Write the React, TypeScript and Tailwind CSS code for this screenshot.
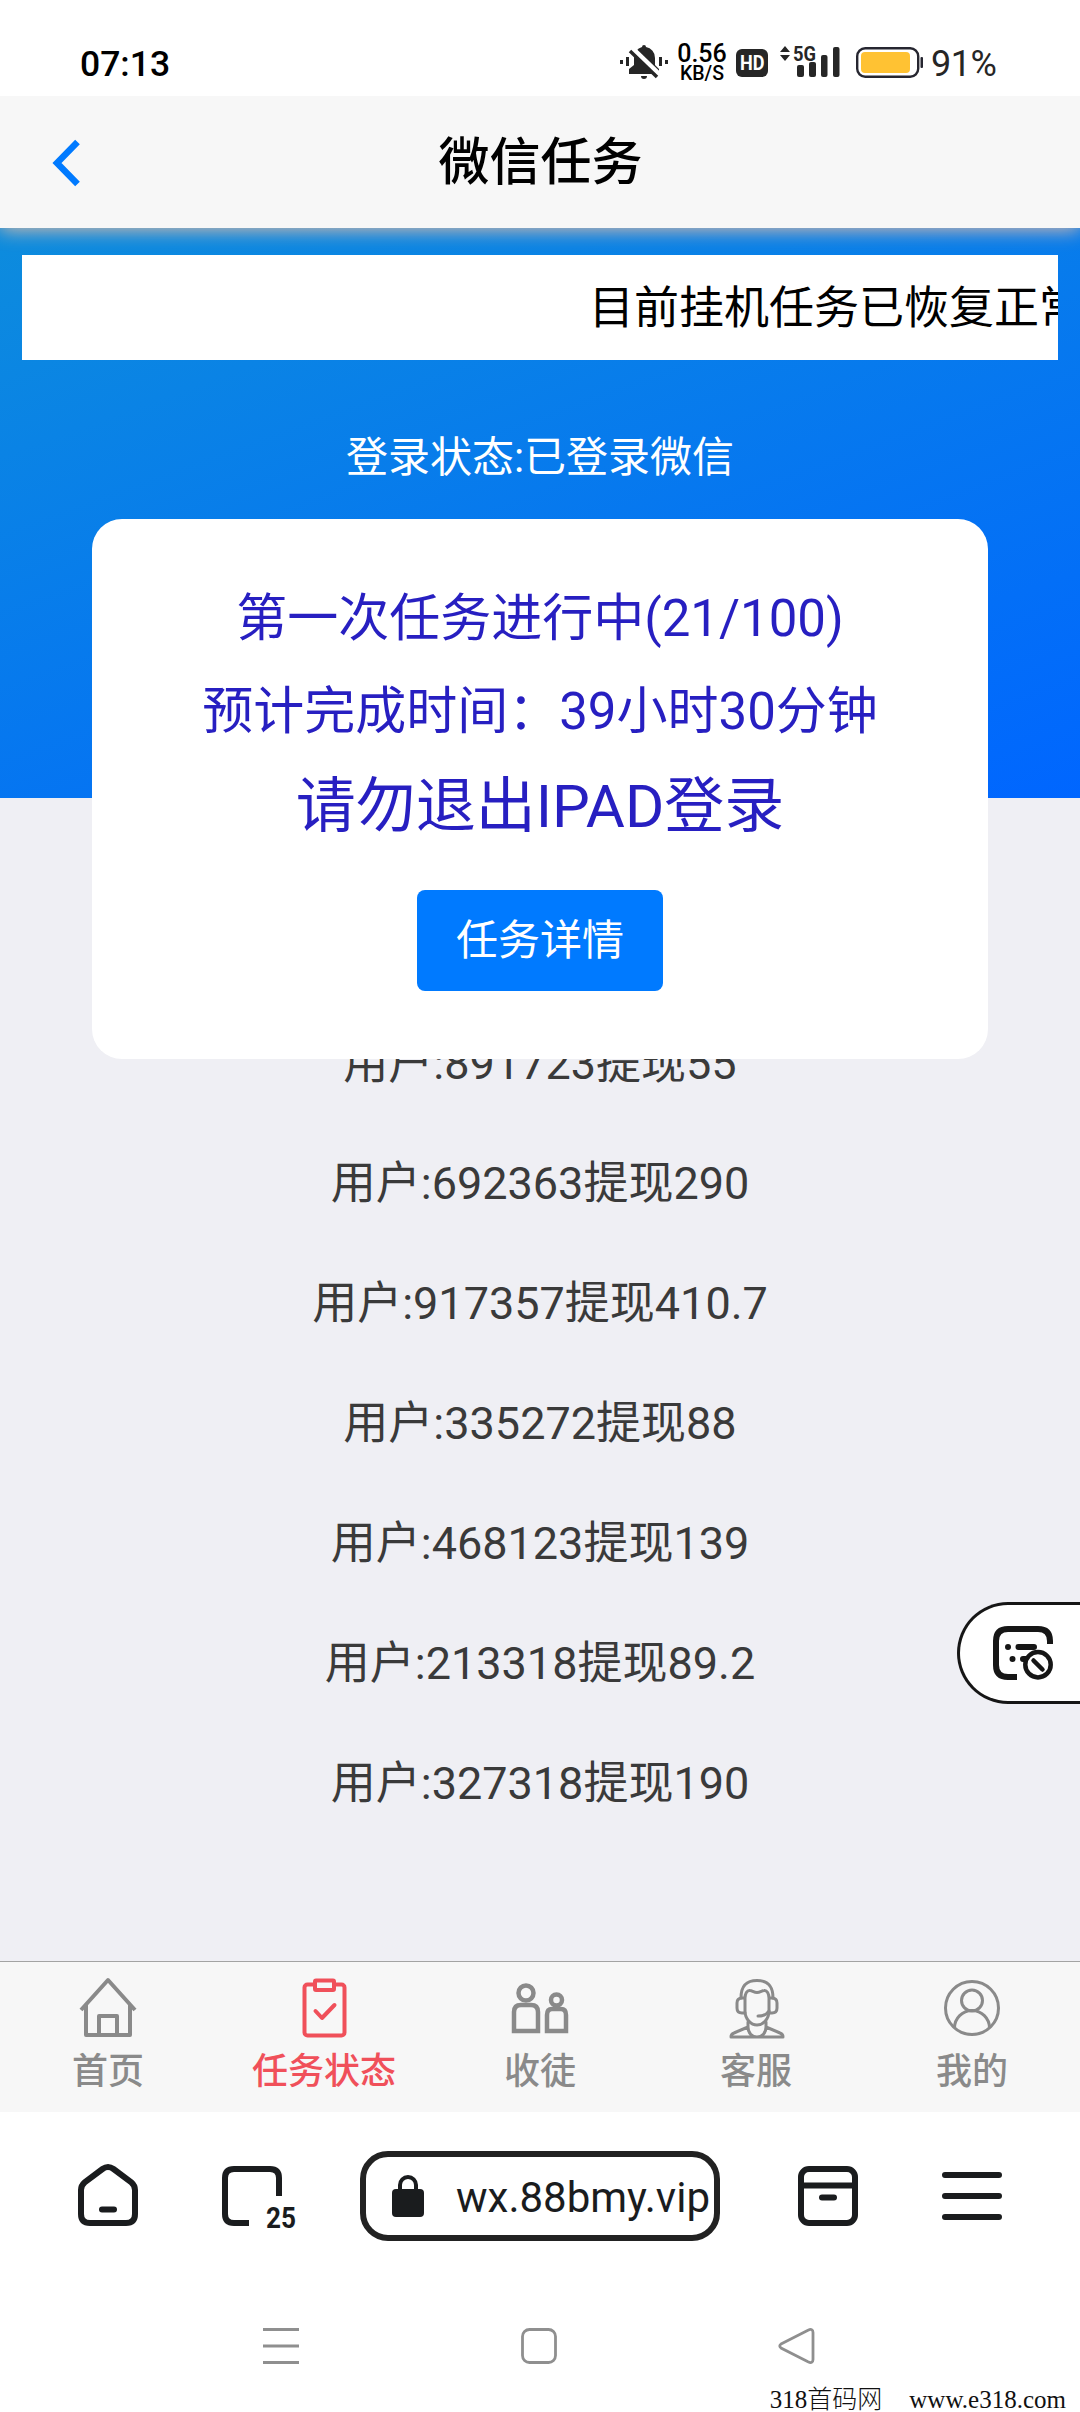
import type { ReactNode } from "react";

const USERS = [
  { id: "891723", amount: "55" },
  { id: "692363", amount: "290" },
  { id: "917357", amount: "410.7" },
  { id: "335272", amount: "88" },
  { id: "468123", amount: "139" },
  { id: "213318", amount: "89.2" },
  { id: "327318", amount: "190" },
];

function StatusBar() {
  return (
    <div className="relative z-20 flex h-24 items-start bg-white pl-[80px] text-[#262626]">
      <span className="mt-[43px] w-[540px] text-[35.5px] leading-[42px] font-medium text-black">07:13</span>
      {/* muted bell */}
      <svg className="mt-[45px] h-[36px] w-[50px] shrink-0" viewBox="0 0 50 36" fill="currentColor">
        <path d="M0 15h3v4H0zM6 12h3v9H6zM39 12h3v9h-3zM45 15h3v4h-3z" />
        <path d="M22 2a2 2 0 0 1 4 0a11 11 0 0 1 9 11v7l4 4v5H9v-5l5-4v-7a11 11 0 0 1 8-11zM21 31h6a3 3 0 0 1-6 0z" />
        <path d="M12 3l29 28" stroke="#fff" strokeWidth="5" />
        <path d="M10 6l27 26" stroke="currentColor" strokeWidth="3.500" />
      </svg>
      <div className="mt-[43px] ml-[5px] flex w-[54px] flex-col items-center font-medium text-black">
        <span className="text-[25px] leading-[22px]">0.56</span>
        <span className="text-[19.5px] leading-[18px]">KB/S</span>
      </div>
      <div className="mt-[49px] ml-[7px] grid h-[28px] w-[32px] place-items-center rounded-[6px] bg-[#262626] text-[21px] leading-none font-bold text-white">
        <span className="scale-x-[0.86]">HD</span>
      </div>
      <svg className="mt-[45px] ml-[12px] h-[33px] w-[62px] shrink-0" viewBox="0 0 62 33" fill="currentColor">
        <path d="M0 7l5-6l5 6zM0 10h10l-5 6z" />
        <text x="13" y="15.500" fontSize="21" fontWeight="700" textLength="23" lengthAdjust="spacingAndGlyphs">5G</text>
        <rect x="17" y="20" width="7" height="12" rx="2" />
        <rect x="29" y="17" width="7" height="15" rx="2" />
        <rect x="41" y="10" width="6.500" height="22" rx="2" />
        <rect x="53" y="2" width="6.500" height="30" rx="2" />
      </svg>
      <svg className="mt-[47px] ml-[14px] h-[31px] w-[68px] shrink-0" viewBox="0 0 68 31">
        <rect x="1.200" y="1.200" width="61" height="28.600" rx="8" fill="none" stroke="#262630" strokeWidth="2.4" />
        <rect x="5" y="5" width="49" height="21" rx="4" fill="#ffc233" />
        <rect x="64.500" y="10" width="2.500" height="11" rx="1" fill="#262630" />
      </svg>
      <span className="mt-[43px] ml-[7px] text-[36px] leading-[42px] tracking-[-0.5px]">91%</span>
    </div>
  );
}

function NavBar() {
  return (
    <div className="relative z-10 flex h-[132px] items-center bg-[#f7f7f7] shadow-[0_2px_18px_rgba(255,195,160,0.85)]">
      <button type="button" className="ml-[50px] w-[60px]">
        <svg className="mt-[1px] h-[50px] w-[34px]" viewBox="0 0 34 50" fill="none">
          <path d="M27.500 4L7 25L27.500 46" stroke="#007aff" strokeWidth="6.500" />
        </svg>
      </button>
      <h1 className="mt-[2px] mr-[109px] flex-1 text-center text-[51px] leading-[60px] font-medium text-black">微信任务</h1>
    </div>
  );
}

function TaskCard() {
  return (
    <div className="mx-auto mt-[31px] flex h-[540px] w-[896px] flex-col items-center rounded-[30px] bg-white pt-[53px] text-[#271fc1]">
      <p className="text-[51px] leading-[93px]">第一次任务进行中(21/100)</p>
      <p className="text-[51px] leading-[94px]">预计完成时间：39小时30分钟</p>
      <p className="text-[60px] leading-[95px]">请勿退出IPAD登录</p>
      <button type="button" className="mt-[36px] h-[101px] w-[246px] rounded-[8px] bg-[#007aff] text-[42px] leading-none text-white">
        任务详情
      </button>
    </div>
  );
}

function Tab({ label, active, children }: { label: string; active?: boolean; children: ReactNode }) {
  return (
    <div className={active ? "flex flex-1 flex-col items-center text-[#f0505a]" : "flex flex-1 flex-col items-center text-[#8a8a8a]"}>
      <svg className="mt-[14px] size-[64px]" viewBox="0 0 64 64" fill="none" stroke="currentColor" strokeWidth="4">
        {children}
      </svg>
      <span className="mt-[10px] text-[36px] leading-[44px] font-medium">{label}</span>
    </div>
  );
}

function TabBar() {
  return (
    <div className="flex h-[151px] border-t border-[#a3a3a3] bg-[#f7f7f7]">
      <Tab label="首页">
        <path d="M5 34L32 4L59 34M10 29v30h44V29" strokeLinejoin="round" />
        <path d="M23 59V40h18v19" strokeLinejoin="round" />
      </Tab>
      <Tab label="任务状态" active>
        <rect x="12.500" y="8.500" width="40" height="51" rx="3" />
        <rect x="23" y="4.500" width="19" height="9.500" rx="1" fill="#f7f7f7" />
        <path d="M23.500 35l6.500 7L42.500 29" strokeLinecap="round" strokeLinejoin="round" />
      </Tab>
      <Tab label="收徒">
        <circle cx="18" cy="17" r="7.500" strokeWidth="4.500" />
        <path d="M6 55V36q0-7 7-7h10q7 0 7 7v19z" strokeWidth="4.500" />
        <circle cx="48.500" cy="24" r="5.500" strokeWidth="4.500" />
        <path d="M39 55V39q0-6 5-6h9q5 0 5 6v16z" strokeWidth="4.500" />
      </Tab>
      <Tab label="客服">
        <g strokeWidth="3" strokeLinecap="round" strokeLinejoin="round" transform="translate(1 0)">
          <path d="M16 22C16 9 22 4.500 32 4.500S48 9 48 22" />
          <path d="M20 22c0-4 2-8 5-7.500c2 0 4 2 7 2s5-2 7-2c3-.5 5 3.500 5 7.500v13c0 8-6 14-12 14s-12-6-12-14z" />
          <path d="M19 22h-2q-5 0-5 5v5q0 5 5 5h3M45 22h2q5 0 5 5v5q0 5-5 5h-3M44 35q-3 5-11 5" />
          <path d="M23 46v5L9 57q-3 1-3 4h52q0-3-3-4l-14-6v-5M23 51c0 6 4 10 9 10s9-4 9-10" />
        </g>
      </Tab>
      <Tab label="我的">
        <g strokeWidth="3">
          <circle cx="32" cy="32" r="26.500" />
          <circle cx="32" cy="24.500" r="10.500" />
          <path d="M14.500 52a17.500 17.500 0 0 1 35 0" />
        </g>
      </Tab>
    </div>
  );
}

function BrowserBar() {
  return (
    <div className="flex h-[168px] items-center pl-[72px] text-[#1a1c1e]">
      <svg className="h-[72px] w-[72px] shrink-0" viewBox="0 0 72 72" fill="none" stroke="currentColor" strokeWidth="6">
        <path d="M9 54V30q0-4.500 4-8L30.500 9q5.500-4 11 0L59 22q4 3.500 4 8v24q0 9-9 9H18q-9 0-9-9z" />
        <path d="M30 49.500h12" strokeLinecap="round" />
      </svg>
      <svg className="ml-[72px] h-[72px] w-[84px] shrink-0 overflow-visible" viewBox="0 0 84 72" fill="none">
        <path d="M33 63H18q-9 0-9-9V18q0-9 9-9h36q9 0 9 9v18" stroke="currentColor" strokeWidth="6" />
        <text x="50" y="68" fill="currentColor" fontSize="29.500" fontWeight="700" textLength="30" lengthAdjust="spacingAndGlyphs">25</text>
      </svg>
      <div className="ml-[60px] flex h-[90px] w-[360px] shrink-0 items-center rounded-[28px] border-6 border-[#222] pr-[5px] pl-[24px]">
        <svg className="h-[44px] w-[36px] shrink-0" viewBox="0 0 36 44" fill="none">
          <rect x="2" y="15" width="32" height="28" rx="4" fill="currentColor" />
          <path d="M10 17v-6a8 8 0 0 1 16 0v6" stroke="currentColor" strokeWidth="4" />
        </svg>
        <span className="mt-[4px] ml-[30px] min-w-0 flex-1 overflow-hidden text-[42px] leading-[54px] whitespace-nowrap">wx.88bmy.vip</span>
      </div>
      <svg className="ml-[72px] size-[72px] shrink-0" viewBox="0 0 72 72" fill="none" stroke="currentColor" strokeWidth="6">
        <rect x="9" y="9" width="54" height="54" rx="8" />
        <path d="M9 25.500h54" />
        <path d="M30 37.500h12" strokeLinecap="round" />
      </svg>
      <svg className="ml-[72px] size-[72px] shrink-0" viewBox="0 0 72 72" stroke="currentColor" strokeWidth="6" strokeLinecap="round">
        <path d="M9 15h54M9 36h54M9 57h54" />
      </svg>
    </div>
  );
}

function SystemBar() {
  return (
    <div className="h-[132px]">
      <div className="flex h-[107px] items-center pt-[25px] pl-[261px] text-[#8f8f8f]">
        <svg className="size-[40px]" viewBox="0 0 40 40" stroke="currentColor" strokeWidth="3">
          <path d="M2 3.500h36M2 20h36M2 36.500h36" />
        </svg>
        <svg className="ml-[218px] size-[40px]" viewBox="0 0 40 40" fill="none" stroke="currentColor" strokeWidth="2.800">
          <rect x="3.500" y="3.500" width="33" height="33" rx="7" />
        </svg>
        <svg className="ml-[218px] size-[40px]" viewBox="0 0 40 40" fill="none" stroke="currentColor" strokeWidth="2.800">
          <path d="M4 18L31 4.200Q36 2 36 6.500V33.500Q36 38 31 35.800L4 22Q1.500 20 4 18z" />
        </svg>
      </div>
      <div className="flex h-[25px] items-center justify-end gap-[27px] pr-[14px] font-['Liberation_Serif','Noto_Sans_CJK_SC',serif] text-[25px] leading-[25px] font-light text-[#111]">
        <span>318首码网</span>
        <span>www.e318.com</span>
      </div>
    </div>
  );
}

export default function App() {
  return (
    <div className="relative flex h-[2412px] w-[1080px] flex-col overflow-hidden bg-white font-[Roboto,'Noto_Sans_CJK_SC',sans-serif]">
      <StatusBar />
      <NavBar />
      <div className="h-[1733px] overflow-hidden bg-[#efeff4]">
        <div className="h-[570px] bg-[linear-gradient(160deg,#0d8cdd,#0066ff)] pt-[27px]">
          {/* scrolling notice */}
          <div className="mx-[22px] h-[105px] overflow-hidden bg-white pl-[567px] text-[45px] leading-[108px] whitespace-nowrap text-black">
            目前挂机任务已恢复正常
          </div>
          <p className="mt-[68px] text-center text-[42px] leading-[60px] text-white">登录状态:已登录微信</p>
          <TaskCard />
        </div>
        <div className="mt-[261px] h-[800px] overflow-hidden">
          <ul className="-mt-[55px] text-center text-[45px] leading-[120px] text-[#3a3a3a]">
            {USERS.map((u) => (
              <li key={u.id}>
                用户:{u.id}提现{u.amount}
              </li>
            ))}
          </ul>
        </div>
      </div>
      <TabBar />
      <BrowserBar />
      <SystemBar />

      {/* floating reader toggle */}
      <div className="absolute top-[1602px] right-0 h-[102px] w-[123px] rounded-l-full border-3 border-r-0 border-[#161616] bg-white pt-[18px] pl-[30px] text-[#161616]">
        <svg className="h-[60px] w-[66px]" viewBox="0 0 66 60" fill="none" stroke="currentColor" strokeWidth="6">
          <path d="M27 54H18Q6 54 6 42V18Q6 6 18 6H48Q60 6 60 18V21" />
          <path d="M18 24h.01M28.500 24H44M22.500 36h.01M33 36h3" strokeLinecap="round" />
          <circle cx="48" cy="41.700" r="12.700" fill="#fff" strokeWidth="4.500" />
          <path d="M43.500 37.500l9 9" strokeWidth="4.500" strokeLinecap="round" />
        </svg>
      </div>
    </div>
  );
}
